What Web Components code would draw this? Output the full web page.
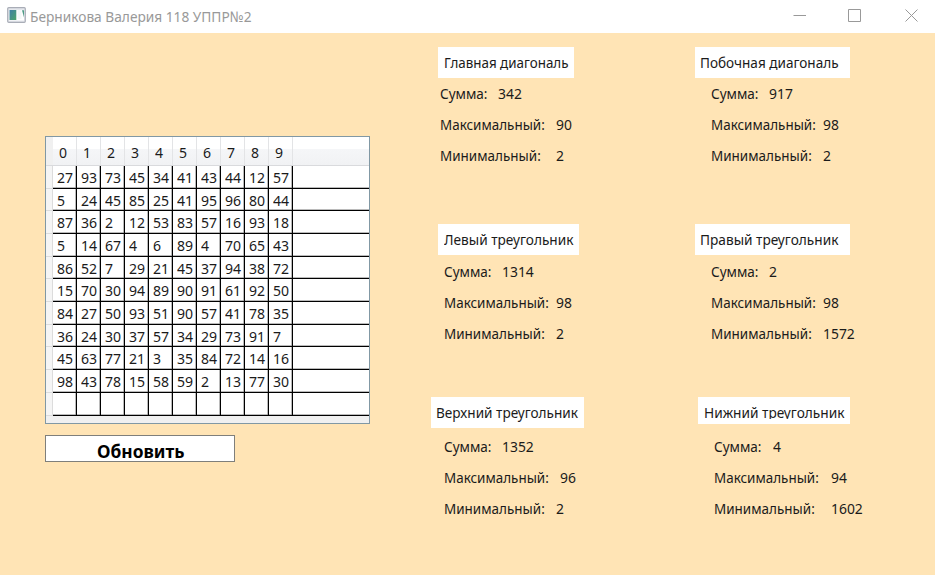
<!DOCTYPE html>
<html lang="ru">
<head>
<meta charset="utf-8">
<title>Берникова Валерия 118 УППР№2</title>
<style>
html,body{margin:0;height:100%;overflow:hidden}
body{font-family:"Noto Sans","Open Sans",sans-serif;font-size:14.6px;color:#1b1b1b;background:#ffe4b5}
</style>
</head>
<body>
<app-window></app-window>
<script>
// Text condensed horizontally to a given advance width.
class FitText extends HTMLElement{
  connectedCallback(){
    const r=this.attachShadow({mode:'open'});
    r.innerHTML='<style>:host{display:inline-block;white-space:pre;flex:none}span{display:inline-block;white-space:pre;transform-origin:0 50%}</style><span></span>';
    const s=r.querySelector('span'),t=this.getAttribute('text'),w=+this.getAttribute('w');
    s.textContent=t;
    s.style.transform='scaleX('+w/s.getBoundingClientRect().width+')';
    this.style.width=w+'px';
  }
}
class TitleBar extends HTMLElement{
  connectedCallback(){
    this.attachShadow({mode:'open'}).innerHTML=`<style>
    :host{display:flex;height:33.4px;flex:none;background:#fff;color:#999;box-sizing:border-box;padding:0 17px 0 7px;line-height:32px;font-size:14.6px}
    svg{flex:none;display:block}.ico{margin:7px 4px 0 0}.sp{flex:1}.btns{margin-top:9px}</style>
    <svg class="ico" width="19" height="16" viewBox="0 0 19 16"><defs><linearGradient id="g" x2="1" y2="1"><stop stop-color="#3f7fa5"/><stop offset="1" stop-color="#4ca56a"/></linearGradient></defs><rect x=".7" y=".7" width="17.6" height="14.6" rx="1" fill="#e4e7ec" stroke="#a9adb7" stroke-width="1.2"/><rect x="2" y="3" width="15" height="10.5" fill="#fff"/><rect x="2.5" y="3" width="6.8" height="10" fill="url(#g)"/><path d="M10.5 3h4v9h-4z" fill="#f4f8f8"/><path d="M15 3.3h2v7.2z" fill="#4e9c86"/></svg>
    <fit-text text="Берникова Валерия 118 УППР№2" w="221.5"></fit-text><span class="sp"></span>
    <svg class="btns" width="125" height="14" viewBox="0 0 125 14" fill="none" stroke="#999" stroke-width="1"><path d="M.5 6.5h12.5M55.5 .5h12v12h-12zM112.5 .5l12 12M124.5 .5l-12 12"/></svg>`;
  }
}
class DataTable extends HTMLElement{
  connectedCallback(){
    const d=['27 93 73 45 34 41 43 44 12 57','5 24 45 85 25 41 95 96 80 44','87 36 2 12 53 83 57 16 93 18','5 14 67 4 6 89 4 70 65 43','86 52 7 29 21 45 37 94 38 72','15 70 30 94 89 90 91 61 92 50','84 27 50 93 51 90 57 41 78 35','36 24 30 37 57 34 29 73 91 7','45 63 77 21 3 35 84 72 14 16','98 43 78 15 58 59 2 13 77 30'].map(x=>x.split(' '));
    d.push(Array(10).fill(''));
    const num=t=>t?`<fit-text text="${t}" w="${t.length*8.05}"></fit-text>`:'';
    this.attachShadow({mode:'open'}).innerHTML=`<style>
    :host{display:flex;flex-direction:column;width:325px;height:288px;box-sizing:border-box;border:1px solid #8198a4;background:#f0f0f0}
    .head{display:flex;height:29px;box-sizing:border-box;flex:none;padding-left:7px;background:linear-gradient(90deg,#f0f0f0 7px,transparent 7px),linear-gradient(#fff 0 43%,#f5f6f8 43%,#f1f2f4);border-bottom:1px solid #d9dadd;line-height:30.4px}
    .head b{font-weight:400;width:24px;box-sizing:border-box;padding-left:6px;border-right:1px solid #e3e4e6}
    .row{display:flex;height:22.7px;flex:none;line-height:23px}
    .row::before{content:"";width:7px;flex:none;box-sizing:border-box;border:solid #dcdcdc;border-width:0 1px 1px 0;background:#f5f5f5}
    .row i{font-style:normal;width:24px;flex:none;box-sizing:border-box;padding-left:3.8px;border-right:1px solid #000;border-bottom:1px solid #000;background:#fff;box-shadow:inset -.5px -.5px 0 #777}
    .row u{flex:1;background:#fff;border-bottom:1px solid #000;box-shadow:inset 0 -.5px 0 #777}
    </style><div class="head">${[...'0123456789'].map(x=>`<b>${num(x)}</b>`).join('')}</div>
    ${d.map(r=>`<div class="row">${r.map(x=>`<i>${num(x)}</i>`).join('')}<u></u></div>`).join('')}`;
  }
}
class RefreshButton extends HTMLElement{
  connectedCallback(){
    this.attachShadow({mode:'open'}).innerHTML=`<style>:host{display:block}
    button{display:flex;justify-content:center;width:190px;height:27px;box-sizing:border-box;border:1px solid #7f7f7b;background:#fff;padding:2px 0 0;font:bold 17px/27px "Noto Sans","Open Sans",sans-serif;color:#000}</style>
    <button><fit-text text="Обновить" w="87.5"></fit-text></button>`;
  }
}
class StatPanel extends HTMLElement{
  connectedCallback(){
    const [x,w,tx,tw,h,gap,lx]=this.getAttribute('geo').split(' ').map(Number);
    const widths=[47.5,104.8,100.8],names=['Сумма:','Максимальный:','Минимальный:'];
    const vals=this.getAttribute('vals').split(' '),vx=this.getAttribute('vx').split(' ').map(Number);
    this.attachShadow({mode:'open'}).innerHTML=`<style>:host{display:block}
    .t{margin-left:${x}px;width:${w}px;height:${h}px;box-sizing:border-box;padding-left:${tx}px;background:#fff;line-height:31px;overflow:hidden}
    .t div{height:${h<31?22:31}px;overflow:hidden}
    .rows{padding:${gap}px 0 0 ${lx}px}.r{display:flex;height:31.1px;line-height:31px}
    </style><div class="t"><div><fit-text text="${this.getAttribute('name')}" w="${tw}"></fit-text></div></div>
    <div class="rows">${names.map((n,i)=>`<div class="r"><fit-text text="${n}" w="${widths[i]}"></fit-text><fit-text style="margin-left:${vx[i]-lx-widths[i]}px" text="${vals[i]}" w="${vals[i].length*7.95}"></fit-text></div>`).join('')}</div>`;
  }
}
class AppWindow extends HTMLElement{
  connectedCallback(){
    this.attachShadow({mode:'open'}).innerHTML=`<style>
    :host{display:flex;flex-direction:column;width:935px;height:575px;background:#ffe4b5}
    main{display:grid;grid-template-columns:431px 504px;flex:1;min-height:0}
    .left{padding:102.6px 0 0 45px}refresh-button{margin-top:11px}data-table{display:flex}
    .stats{display:grid;grid-template-columns:260px 244px;grid-template-rows:177.4px 172.6px 150px;padding-top:13.6px}
    </style><title-bar></title-bar><main><section class="left"><data-table></data-table><refresh-button></refresh-button></section>
    <section class="stats">
    <stat-panel name="Главная диагональ" geo="7 136 5.5 124.5 31 0 9.3" vals="342 90 2" vx="67.5 125.4 125.4"></stat-panel>
    <stat-panel name="Побочная диагональ" geo="4 155.4 5.2 138.6 31 0 19.7" vals="917 98 2" vx="78.2 132.4 132.4"></stat-panel>
    <stat-panel name="Левый треугольник" geo="7 141 5.8 129.5 31 .5 12.5" vals="1314 98 2" vx="71.2 125.4 125.4"></stat-panel>
    <stat-panel name="Правый треугольник" geo="4 155.4 5.2 138.4 31 .5 19.7" vals="2 98 1572" vx="78.4 132.4 132.5"></stat-panel>
    <stat-panel name="Верхний треугольник" geo="0 153 5.2 142 31 2.7 12.5" vals="1352 96 2" vx="71.2 129 125.4"></stat-panel>
    <stat-panel name="Нижний треугольник" geo="7 152 5.5 140.5 27 6.7 23.3" vals="4 94 1602" vx="82 139.7 139.7"></stat-panel>
    </section></main>`;
  }
}
customElements.define('fit-text',FitText);
customElements.define('title-bar',TitleBar);
customElements.define('data-table',DataTable);
customElements.define('refresh-button',RefreshButton);
customElements.define('stat-panel',StatPanel);
customElements.define('app-window',AppWindow);
</script>
</body>
</html>
